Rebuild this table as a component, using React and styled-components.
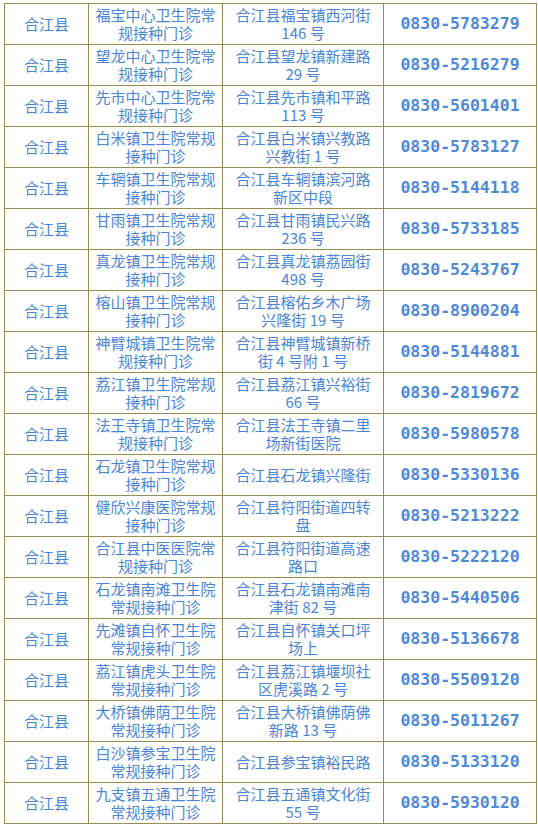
import styled, { createGlobalStyle } from 'styled-components'

const GlobalStyle = createGlobalStyle`
    html, body {
        margin: 0;
        padding: 0;
        background: #ffffff;
    }
    body {
        padding: 3px 0 0 4px;
        font-family: "Noto Sans CJK SC", "Noto Sans", sans-serif;
    }
`

const Table = styled.table`
    width: 532px;
    table-layout: fixed;
    border-collapse: collapse;
    border: 1px solid #9a8c52;
`

const Col = styled.col`
    width: ${props => props.$w}px;
`

const Cell = styled.td`
    height: 40px;
    padding: 0;
    border: 1px solid #9a8c52;
    text-align: center;
    vertical-align: middle;
    color: #4a86d6;
    font-size: 15px;
    line-height: 18px;
    white-space: nowrap;
`

const Phone = styled(Cell)`
    font-family: "DejaVu Sans Mono", "Liberation Mono", monospace;
    font-weight: bold;
    font-size: 16.5px;
    color: #4f8ad8;
`

const Line = styled.div`
    display: block;
    height: 18px;
`

const rows = [
    ['福宝中心卫生院常|规接种门诊', '合江县福宝镇西河街|146 号', '0830-5783279'],
    ['望龙中心卫生院常|规接种门诊', '合江县望龙镇新建路|29 号', '0830-5216279'],
    ['先市中心卫生院常|规接种门诊', '合江县先市镇和平路|113 号', '0830-5601401'],
    ['白米镇卫生院常规|接种门诊', '合江县白米镇兴教路|兴教街 1 号', '0830-5783127'],
    ['车辋镇卫生院常规|接种门诊', '合江县车辋镇滨河路|新区中段', '0830-5144118'],
    ['甘雨镇卫生院常规|接种门诊', '合江县甘雨镇民兴路|236 号', '0830-5733185'],
    ['真龙镇卫生院常规|接种门诊', '合江县真龙镇荔园街|498 号', '0830-5243767'],
    ['榕山镇卫生院常规|接种门诊', '合江县榕佑乡木广场|兴隆街 19 号', '0830-8900204'],
    ['神臂城镇卫生院常|规接种门诊', '合江县神臂城镇新桥|街 4 号附 1 号', '0830-5144881'],
    ['荔江镇卫生院常规|接种门诊', '合江县荔江镇兴裕街|66 号', '0830-2819672'],
    ['法王寺镇卫生院常|规接种门诊', '合江县法王寺镇二里|场新街医院', '0830-5980578'],
    ['石龙镇卫生院常规|接种门诊', '合江县石龙镇兴隆街', '0830-5330136'],
    ['健欣兴康医院常规|接种门诊', '合江县符阳街道四转|盘', '0830-5213222'],
    ['合江县中医医院常|规接种门诊', '合江县符阳街道高速|路口', '0830-5222120'],
    ['石龙镇南滩卫生院|常规接种门诊', '合江县石龙镇南滩南|津街 82 号', '0830-5440506'],
    ['先滩镇自怀卫生院|常规接种门诊', '合江县自怀镇关口坪|场上', '0830-5136678'],
    ['荔江镇虎头卫生院|常规接种门诊', '合江县荔江镇堰坝社|区虎溪路 2 号', '0830-5509120'],
    ['大桥镇佛荫卫生院|常规接种门诊', '合江县大桥镇佛荫佛|新路 13 号', '0830-5011267'],
    ['白沙镇参宝卫生院|常规接种门诊', '合江县参宝镇裕民路', '0830-5133120'],
    ['九支镇五通卫生院|常规接种门诊', '合江县五通镇文化街|55 号', '0830-5930120'],
]

const Lines = ({ text }) => text.split('|').map((t, i) => <Line key={i}>{t}</Line>)

const App = () => {
    return (
        <>
            <GlobalStyle />
            <Table>
                <colgroup>
                    <Col $w={84} />
                    <Col $w={134} />
                    <Col $w={161} />
                    <Col $w={153} />
                </colgroup>
                <tbody>
                    {rows.map(([clinic, address, phone]) => (
                        <tr key={phone}>
                            <Cell>合江县</Cell>
                            <Cell><Lines text={clinic} /></Cell>
                            <Cell><Lines text={address} /></Cell>
                            <Phone>{phone}</Phone>
                        </tr>
                    ))}
                </tbody>
            </Table>
        </>
    )
}

export default App
